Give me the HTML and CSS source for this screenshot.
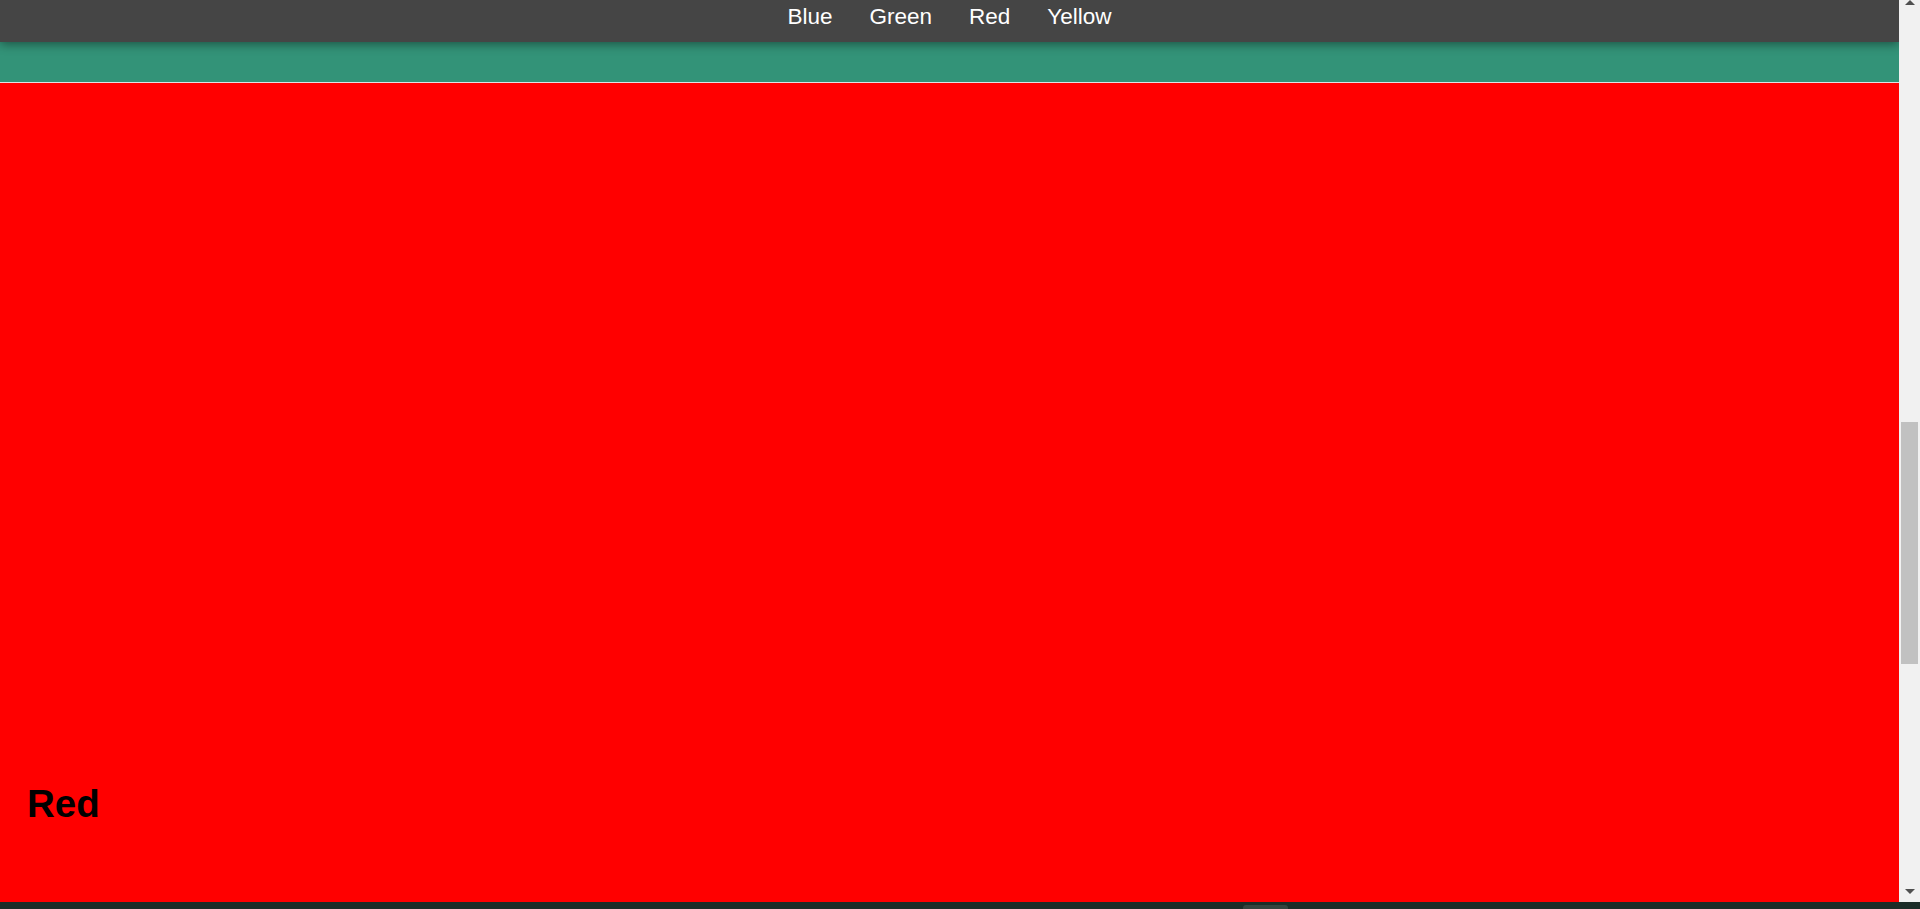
FILE: index.html
```html
<!DOCTYPE html>
<html lang="en">
<head>
<meta charset="utf-8">
<title>Colors</title>
<link rel="stylesheet" href="styles.css">
</head>
<body>
<div class="screen">
  <div class="viewport">
    <div class="page">
      <nav class="topnav">
        <a class="nav-link" href="#blue">Blue</a>
        <a class="nav-link" href="#green">Green</a>
        <a class="nav-link" href="#red">Red</a>
        <a class="nav-link" href="#yellow">Yellow</a>
      </nav>
      <section class="band band-green" id="green"></section>
      <div class="divider"></div>
      <section class="band band-red" id="red">
        <h1 class="band-title">Red</h1>
      </section>
    </div>
    <div class="scrollbar">
      <div class="arrow arrow-up"></div>
      <div class="thumb"></div>
      <div class="track-rest"></div>
      <div class="arrow arrow-down"></div>
    </div>
  </div>
  <div class="taskbar">
    <div class="task-item"></div>
  </div>
</div>
</body>
</html>
```

FILE: styles.css
```css
html, body {
  margin: 0;
  padding: 0;
  height: 909px;
  overflow: hidden;
}

body {
  font-family: "Liberation Sans", Arial, sans-serif;
}

.screen {
  display: flex;
  flex-direction: column;
  height: 909px;
  width: 1920px;
}

.viewport {
  display: flex;
  flex-direction: row;
  height: 902px;
}

.page {
  flex: 1;
  display: flex;
  flex-direction: column;
  overflow: hidden;
}

.topnav {
  position: relative;
  z-index: 2;
  height: 42px;
  flex: none;
  background: #454545;
  display: flex;
  justify-content: center;
  align-items: flex-start;
  box-shadow: 0 2px 10px rgba(0, 0, 0, 0.45);
}

.nav-link {
  color: #ffffff;
  text-decoration: none;
  font-size: 22.5px;
  line-height: 33px;
  padding: 0 18.5px;
}

.band {
  flex: none;
}

.band-green {
  height: 40px;
  background: #339378;
}

.divider {
  height: 1px;
  flex: none;
  background: #e2e2e2;
}

.band-red {
  flex: 1;
  background: #ff0000;
  display: flex;
  flex-direction: column;
  justify-content: flex-end;
  padding: 0 0 76px 27px;
}

.band-title {
  margin: 0;
  font-size: 38.5px;
  line-height: 44px;
  font-weight: bold;
  color: #000000;
}

.scrollbar {
  width: 17px;
  flex: none;
  background: #f1f1f1;
  padding: 0 2px;
  display: flex;
  flex-direction: column;
  align-items: center;
}

.arrow {
  width: 0;
  height: 0;
  border-left: 5px solid transparent;
  border-right: 5px solid transparent;
  flex: none;
}

.arrow-up {
  border-bottom: 5px solid #505050;
  margin-left: 1px;
}

.arrow-down {
  border-top: 5px solid #505050;
  margin-left: 1px;
  margin-bottom: 8px;
}

.thumb {
  width: 17px;
  height: 242px;
  margin-top: 417px;
  background: #c1c1c1;
  flex: none;
}

.track-rest {
  flex: 1;
}

.taskbar {
  height: 7px;
  flex: none;
  background: #1b2d28;
  display: flex;
  align-items: flex-end;
  padding-left: 1243px;
}

.task-item {
  width: 45px;
  height: 4px;
  background: #34443f;
  border-radius: 3px 3px 0 0;
}
```
